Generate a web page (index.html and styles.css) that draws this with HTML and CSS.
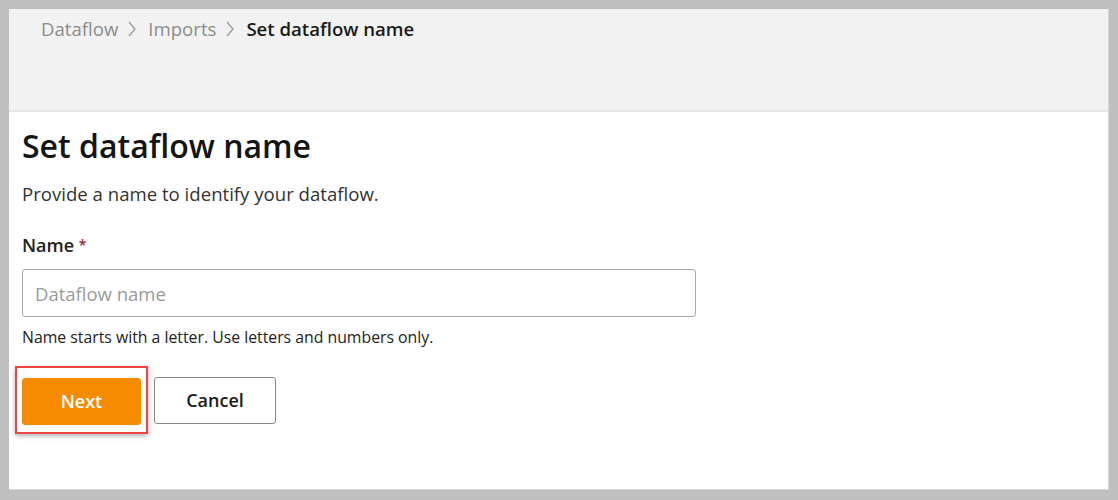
FILE: index.html
```html
<!DOCTYPE html>
<html lang="en">
<head>
<meta charset="utf-8">
<title>Set dataflow name</title>
<link rel="stylesheet" href="styles.css">
</head>
<body>
<div class="frame">
  <div class="window">
    <header class="topbar">
      <nav class="crumbs">
        <span class="crumb">Dataflow</span>
        <svg class="sep" width="10" height="18" viewBox="0 0 10 18" aria-hidden="true"><polyline points="2,2 8,9 2,16" fill="none" stroke="#9a9a9a" stroke-width="1.3"/></svg>
        <span class="crumb">Imports</span>
        <svg class="sep" width="10" height="18" viewBox="0 0 10 18" aria-hidden="true"><polyline points="2,2 8,9 2,16" fill="none" stroke="#9a9a9a" stroke-width="1.3"/></svg>
        <span class="crumb current">Set dataflow name</span>
      </nav>
    </header>
    <main class="content">
      <h1 class="title">Set dataflow name</h1>
      <p class="lead">Provide a name to identify your dataflow.</p>
      <label class="label" for="name">Name <span class="req">*</span></label>
      <input class="field" id="name" type="text" placeholder="Dataflow name">
      <p class="help">Name starts with a letter. Use letters and numbers only.</p>
      <div class="actions">
        <div class="highlight"><button class="btn primary">Next</button></div>
        <button class="btn secondary">Cancel</button>
      </div>
    </main>
  </div>
</div>
</body>
</html>
```

FILE: styles.css
```css
html, body {
  margin: 0;
  padding: 0;
  height: 100%;
}
body {
  background: #c0c0c0;
  font-family: "Open Sans", "Noto Sans", sans-serif;
  color: #1a1a1a;
}
.frame {
  box-sizing: border-box;
  height: 500px;
  padding: 9px 9px 10px 9px;
}
.window {
  box-sizing: border-box;
  height: 100%;
  background: #ffffff;
  border-right: 1px solid #d6d6d6;
  border-bottom: 1px solid #d6d6d6;
  display: flex;
  flex-direction: column;
}
.topbar {
  height: 103px;
  background: #f2f2f2;
  border-bottom: 2px solid #e6e6e6;
  box-sizing: border-box;
  padding: 8px 0 0 32px;
}
.crumbs {
  display: flex;
  align-items: center;
  font-size: 18.6px;
  line-height: 24px;
}
.crumb {
  color: #8c8c8c;
}
.sep {
  display: block;
  margin: 0 11px 0 9px;
}
.crumb.current {
  color: #1a1a1a;
  font-weight: 600;
}
.content {
  padding: 12px 0 0 13px;
  display: flex;
  flex-direction: column;
  align-items: flex-start;
}
.title {
  margin: 0;
  font-size: 32px;
  line-height: 44px;
  font-weight: 600;
  color: #141414;
}
.lead {
  margin: 14px 0 0;
  font-size: 18.6px;
  line-height: 24px;
  color: #333;
}
.label {
  margin-top: 27px;
  font-size: 18px;
  line-height: 24px;
  font-weight: 600;
  color: #222;
}
.req {
  color: #9b1c2e;
  font-size: 14px;
  vertical-align: top;
}
.field {
  box-sizing: border-box;
  margin-top: 12px;
  width: 674px;
  height: 48px;
  border: 1px solid #a8a8a8;
  border-radius: 3px;
  padding: 0 12px;
  font-family: inherit;
  font-size: 18.5px;
  color: #222;
  background: #fff;
}
.field::placeholder {
  color: #9a9a9a;
}
.help {
  margin: 10px 0 0;
  font-size: 15.8px;
  line-height: 20px;
  color: #222;
}
.actions {
  margin-top: 19px;
  display: flex;
  align-items: center;
  gap: 6px;
}
.highlight {
  margin-left: -7px;
  padding: 10px 5px 7px 5px;
  border: 2px solid #ef4444;
  box-shadow: 0 2px 5px rgba(0,0,0,0.3);
}
.btn {
  box-sizing: border-box;
  height: 47px;
  border-radius: 3px;
  font-family: inherit;
  font-size: 18px;
  font-weight: 600;
  cursor: pointer;
  display: block;
  padding-bottom: 2px;
}
.primary {
  width: 119px;
  background: #f68a00;
  border: 1px solid #f68a00;
  color: #fff;
}
.secondary {
  width: 122px;
  background: #fff;
  border: 1px solid #8a8a8a;
  color: #1a1a1a;
}
```
